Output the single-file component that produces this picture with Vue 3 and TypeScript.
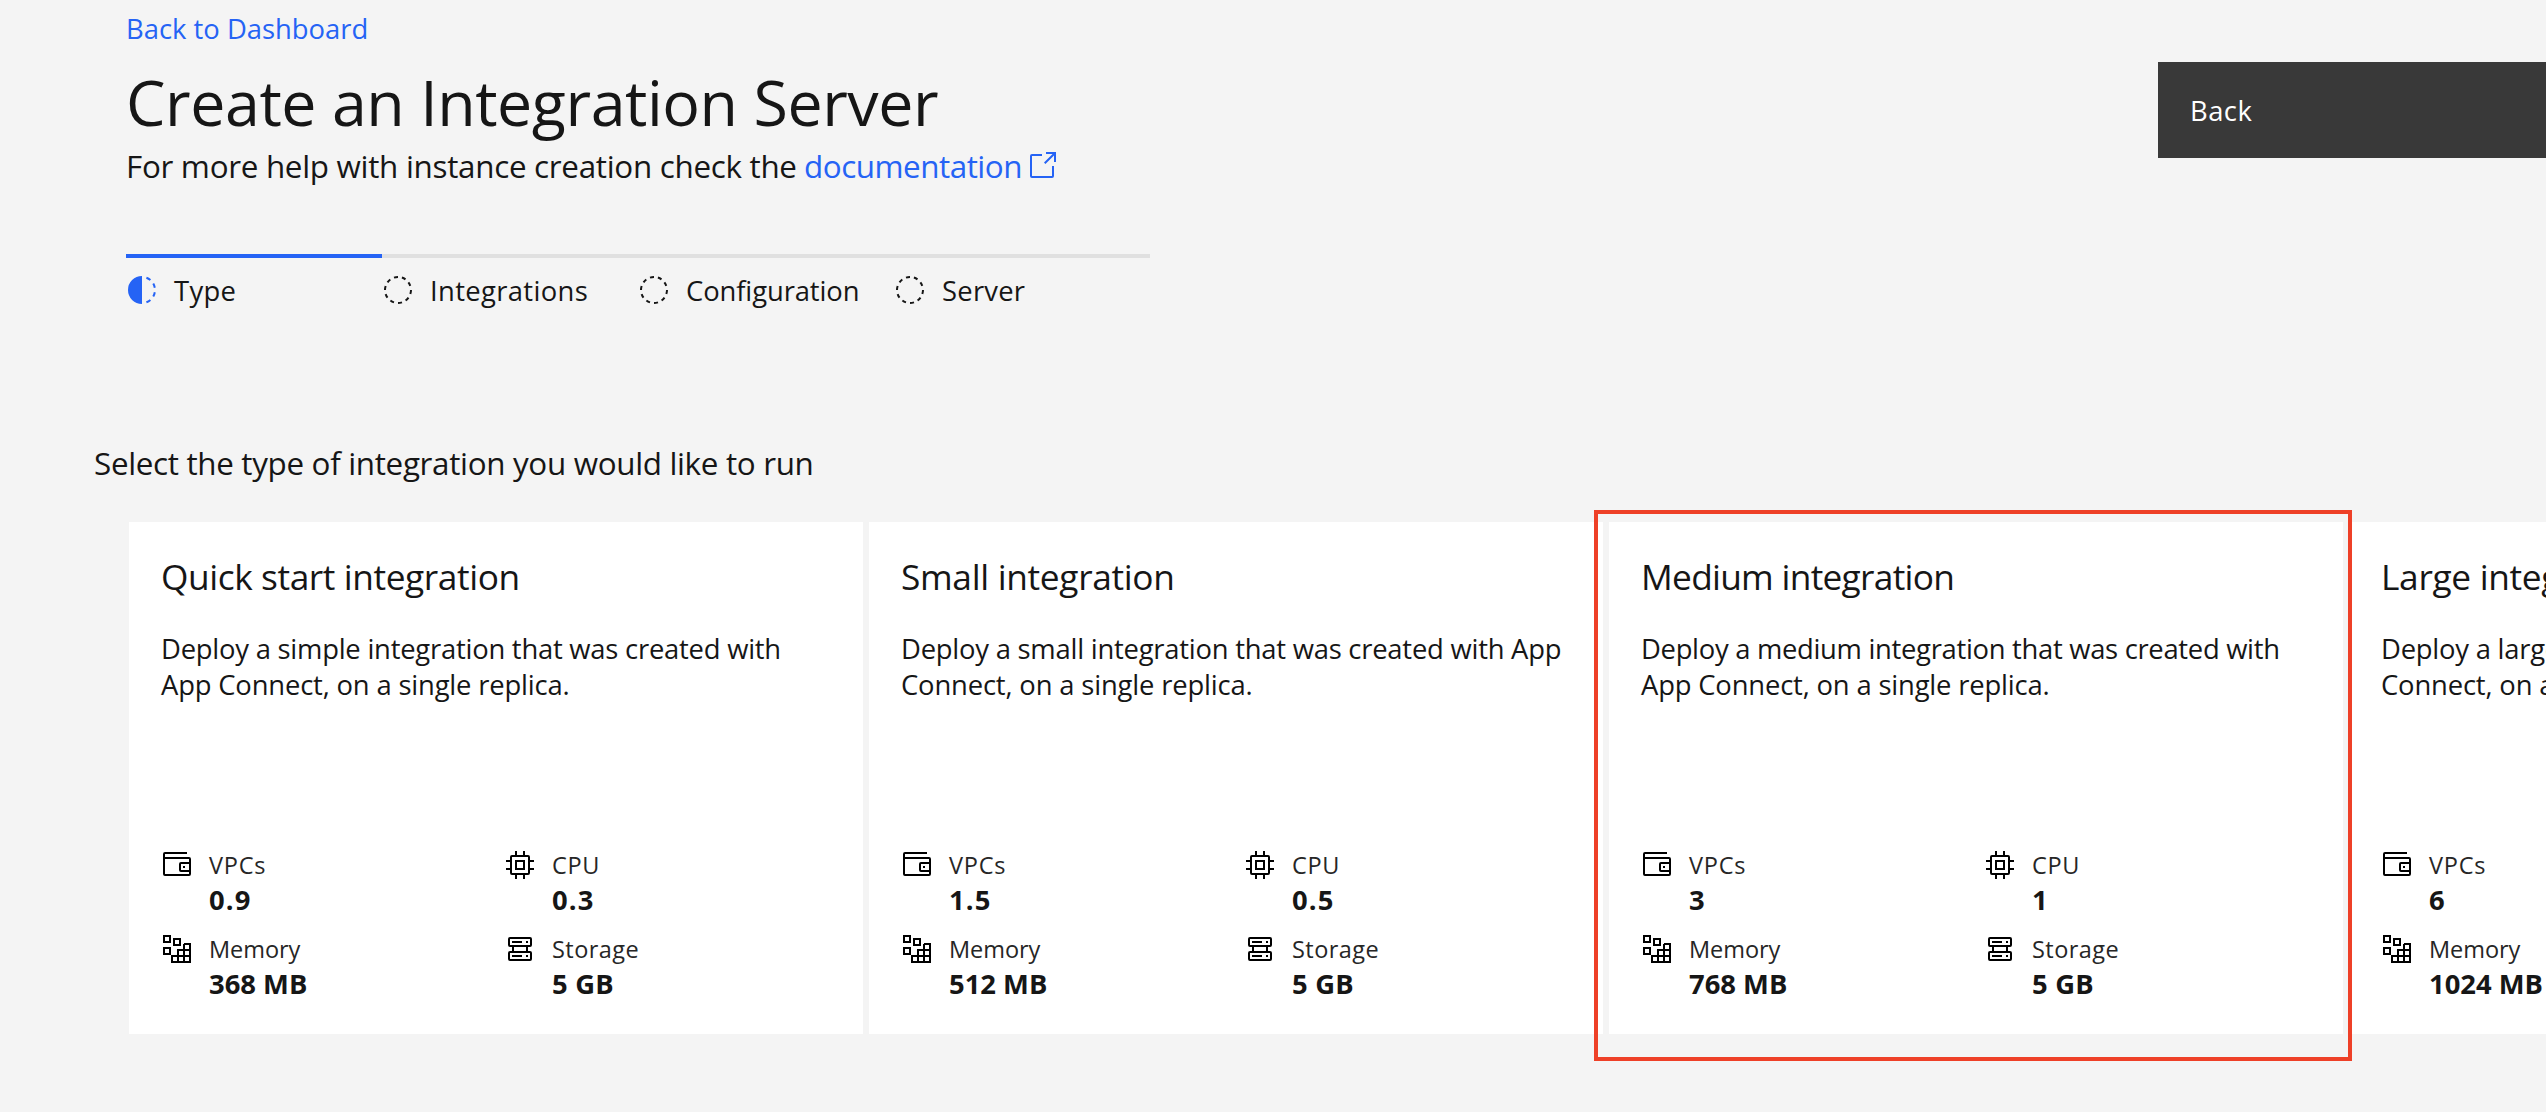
<script setup lang="ts">
interface Line {
  text: string
  tracking: number
}

interface Tile {
  title: Line
  lines: Line[]
  vpcs: Line
  memory: Line
  cpu: Line
  storage: Line
  highlighted?: boolean
}

interface Step {
  label: Line
  current?: boolean
}

const steps: Step[] = [
  { label: { text: 'Type', tracking: 0.3 }, current: true },
  { label: { text: 'Integrations', tracking: 0.35 } },
  { label: { text: 'Configuration', tracking: -0.1 } },
  { label: { text: 'Server', tracking: 0.24 } },
]

const tiles: Tile[] = [
  {
    title: { text: 'Quick start integration', tracking: -0.42 },
    lines: [
      { text: 'Deploy a simple integration that was created with', tracking: -0.23 },
      { text: 'App Connect, on a single replica.', tracking: -0.17 },
    ],
    vpcs: { text: '0.9', tracking: 1.2 },
    cpu: { text: '0.3', tracking: 1.2 },
    memory: { text: '368 MB', tracking: 0 },
    storage: { text: '5 GB', tracking: 0.2 },
  },
  {
    title: { text: 'Small integration', tracking: -0.33 },
    lines: [
      { text: 'Deploy a small integration that was created with App', tracking: -0.23 },
      { text: 'Connect, on a single replica.', tracking: -0.16 },
    ],
    vpcs: { text: '1.5', tracking: 1.2 },
    cpu: { text: '0.5', tracking: 1.2 },
    memory: { text: '512 MB', tracking: 0 },
    storage: { text: '5 GB', tracking: 0.2 },
  },
  {
    title: { text: 'Medium integration', tracking: -0.72 },
    lines: [
      { text: 'Deploy a medium integration that was created with', tracking: -0.3 },
      { text: 'App Connect, on a single replica.', tracking: -0.17 },
    ],
    vpcs: { text: '3', tracking: 0 },
    cpu: { text: '1', tracking: 0 },
    memory: { text: '768 MB', tracking: 0 },
    storage: { text: '5 GB', tracking: 0.2 },
    highlighted: true,
  },
  {
    title: { text: 'Large integration', tracking: -0.33 },
    lines: [
      { text: 'Deploy a large integration that was created with App', tracking: -0.23 },
      { text: 'Connect, on a single replica.', tracking: -0.16 },
    ],
    vpcs: { text: '6', tracking: 0 },
    cpu: { text: '2', tracking: 0 },
    memory: { text: '1024 MB', tracking: 0 },
    storage: { text: '5 GB', tracking: 0.2 },
  },
]

const track = (line: Line) => ({ letterSpacing: `${line.tracking}px` })
</script>

<template>
  <main class="page">
    <header class="header">
      <div class="intro">
        <a class="back-link">Back to Dashboard</a>
        <h1 class="title">Create an Integration Server</h1>
        <p class="subtitle">
          <span class="help">For more help with instance creation check the</span>
          <a class="doc-link">
            <span>documentation</span>
            <svg class="icon" viewBox="0 0 32 32" fill="currentColor">
              <path d="M26,28H6a2,2,0,0,1-2-2V6A2,2,0,0,1,6,4H16V6H6V26H26V16h2V26A2,2,0,0,1,26,28Z" />
              <path d="M20 2V4H26.586L18 12.586L19.414 14L28 5.414V12H30V2Z" />
            </svg>
          </a>
        </p>
      </div>
      <button class="back-button" type="button">Back</button>
    </header>

    <ol class="progress">
      <li v-for="step in steps" :key="step.label.text" class="step" :class="{ current: step.current }">
        <svg v-if="step.current" class="icon" viewBox="0 0 32 32" fill="#2563f5">
          <path
            d="M23.764 6.859l1.285-1.531A13.976 13.976 0 0 0 20.767 2.845l-.683 1.878A11.973 11.973 0 0 1 23.764 6.859zM27.81 14l1.968-.413A13.889 13.889 0 0 0 28.14 9.046L26.409 10A12.52 12.52 0 0 1 27.81 14zM20.084 27.276l.683 1.878a13.873 13.873 0 0 0 4.282-2.482l-1.285-1.532A12.181 12.181 0 0 1 20.084 27.276zM26.409 22l1.732 1a14.14 14.14 0 0 0 1.637-4.587l-1.968-.347A12.152 12.152 0 0 1 26.409 22zM16 30V2a14 14 0 0 0 0 28z"
          />
        </svg>
        <svg v-else class="icon" viewBox="0 0 32 32" fill="#161616">
          <path
            d="M7.7,4.7a14.7,14.7,0,0,0-3,3.1L6.3,9A13.26,13.26,0,0,1,8.9,6.3ZM4.6,12.3l-1.9-.6A12.51,12.51,0,0,0,2,16H4A11.48,11.48,0,0,1,4.6,12.3ZM2.7,20.4a14.4,14.4,0,0,0,2,3.9l1.6-1.2a12.89,12.89,0,0,1-1.7-3.3ZM7.8,27.3a14.4,14.4,0,0,0,3.9,2l.6-1.9A12.89,12.89,0,0,1,9,25.7ZM11.7,2.7l.6,1.9A11.48,11.48,0,0,1,16,4V2A12.51,12.51,0,0,0,11.7,2.7ZM24.2,27.3a15.18,15.18,0,0,0,3.1-3.1L25.7,23A11.53,11.53,0,0,1,23,25.7ZM27.4,19.7l1.9.6A15.47,15.47,0,0,0,30,16H28A11.48,11.48,0,0,1,27.4,19.7ZM29.2,11.6a14.4,14.4,0,0,0-2-3.9L25.6,8.9a12.89,12.89,0,0,1,1.7,3.3ZM24.1,4.6a14.4,14.4,0,0,0-3.9-2l-.6,1.9a12.89,12.89,0,0,1,3.3,1.7ZM20.3,29.3l-.6-1.9A11.48,11.48,0,0,1,16,28v2A21.42,21.42,0,0,0,20.3,29.3Z"
          />
        </svg>
        <span :style="track(step.label)">{{ step.label.text }}</span>
      </li>
    </ol>

    <h2 class="prompt">Select the type of integration you would like to run</h2>

    <div class="tiles">
      <section v-for="tile in tiles" :key="tile.title.text" class="tile">
        <h3 class="tile-title" :style="track(tile.title)">{{ tile.title.text }}</h3>
        <p class="description">
          <span v-for="line in tile.lines" :key="line.text" :style="track(line)">{{ line.text }}</span>
        </p>
        <div class="metrics">
          <div class="metric">
            <svg class="icon" viewBox="0 0 32 32">
              <path d="M22,17h2v2H22Z" />
              <path
                d="M28,8H4V5H26V3H4A2,2,0,0,0,2,5V25a2,2,0,0,0,2,2H28a2,2,0,0,0,2-2V10A2,2,0,0,0,28,8ZM4,25V10H28v3H20a2,2,0,0,0-2,2v6a2,2,0,0,0,2,2h8v2Zm24-4H20V15h8Z"
              />
            </svg>
            <div>
              <div class="label vpcs">VPCs</div>
              <div class="value" :style="track(tile.vpcs)">{{ tile.vpcs.text }}</div>
            </div>
          </div>
          <div class="metric">
            <svg class="icon" viewBox="0 0 32 32">
              <path d="M11,11V21H21V11Zm8,8H13V13h6Z" />
              <path
                d="M30,13V11H26V8a2,2,0,0,0-2-2H21V2H19V6H13V2H11V6H8A2,2,0,0,0,6,8v3H2v2H6v6H2v2H6v3a2,2,0,0,0,2,2h3v4h2V26h6v4h2V26h3a2,2,0,0,0,2-2V21h4V19H26V13ZM24,24H8V8H24Z"
              />
            </svg>
            <div>
              <div class="label cpu">CPU</div>
              <div class="value" :style="track(tile.cpu)">{{ tile.cpu.text }}</div>
            </div>
          </div>
          <div class="metric">
            <svg class="icon outline" viewBox="0 0 32 32">
              <path d="M3 3h6v6H3zM13 6h6v6h-6zM3 15h6v6H3zM23 11h6v18H11v-6h18M23 11v18M17 29V17h12" />
            </svg>
            <div>
              <div class="label memory">Memory</div>
              <div class="value" :style="track(tile.memory)">{{ tile.memory.text }}</div>
            </div>
          </div>
          <div class="metric">
            <svg class="icon outline" viewBox="0 0 32 32">
              <rect x="5" y="5" width="22" height="8" rx="1" />
              <rect x="5" y="19" width="22" height="8" rx="1" />
              <path d="M8 9h10M22 9h2M8 23h10M22 23h2M9 13v6M23 13v6" />
            </svg>
            <div>
              <div class="label storage">Storage</div>
              <div class="value" :style="track(tile.storage)">{{ tile.storage.text }}</div>
            </div>
          </div>
        </div>
        <div v-if="tile.highlighted" class="highlight"></div>
      </section>
    </div>
  </main>
</template>

<style>
body {
  margin: 0;
  background: #f4f4f4;
}
</style>

<style scoped>
.page {
  box-sizing: border-box;
  width: 2546px;
  height: 1112px;
  overflow: hidden;
  background: #f4f4f4;
  color: #161616;
  font-family: 'Open Sans', 'Noto Sans', sans-serif;
  font-size: 27.4px;
  line-height: 36px;
  white-space: nowrap;
}
h1,
h2,
h3,
p,
ol {
  margin: 0;
  padding: 0;
  font-weight: 400;
}
.icon {
  display: block;
  flex: none;
  width: 32px;
  height: 32px;
}
.header {
  display: flex;
  justify-content: space-between;
  align-items: flex-start;
  height: 254px;
  padding-left: 126px;
}
.intro {
  padding-top: 11px;
}
.back-link {
  display: block;
  color: #2563f5;
}
.title {
  margin-top: 15px;
  font-size: 62.7px;
  line-height: 80px;
  letter-spacing: -0.44px;
}
.subtitle {
  display: flex;
  margin-top: 4px;
  font-size: 31.4px;
  line-height: 40px;
}
.help {
  width: 678px;
  letter-spacing: -0.3px;
}
.doc-link {
  display: flex;
  gap: 4px;
  align-items: flex-start;
  color: #2563f5;
  letter-spacing: -0.48px;
}
.doc-link span {
  width: 218px;
}
.doc-link .icon {
  margin-top: 4px;
}
.back-button {
  box-sizing: border-box;
  width: 388px;
  height: 96px;
  margin-top: 62px;
  padding: 1px 32px 0;
  border: 0;
  background: #393939;
  color: #fff;
  font: inherit;
  letter-spacing: 0.46px;
  text-align: left;
}
.progress {
  display: flex;
  width: 1024px;
  height: 54px;
  margin-left: 126px;
  list-style: none;
}
.step {
  box-sizing: border-box;
  display: flex;
  gap: 16px;
  width: 256px;
  padding-top: 15px;
  border-top: 4px solid #e0e0e0;
}
.step .icon {
  margin-top: 1px;
}
.step.current {
  border-top-color: #2563f5;
}
.prompt {
  margin: 135px 0 39px 94px;
  font-size: 31.4px;
  line-height: 40px;
  letter-spacing: -0.33px;
}
.tiles {
  display: flex;
  gap: 6px;
  padding-left: 129px;
}
.tile {
  position: relative;
  box-sizing: border-box;
  display: flex;
  flex: none;
  flex-direction: column;
  width: 734px;
  height: 512px;
  padding: 32px 32px 34px;
  background: #fff;
}
.tile-title {
  font-size: 35.3px;
  line-height: 44px;
}
.description {
  display: flex;
  flex-direction: column;
  margin-top: 33px;
}
.metrics {
  display: grid;
  grid-template-columns: 343px 1fr;
  row-gap: 16px;
  margin-top: auto;
}
.metric {
  display: flex;
  gap: 16px;
  height: 68px;
}
.metric .icon {
  margin-top: 1px;
  fill: #000;
}
.metric .icon.outline {
  fill: none;
  stroke: #000;
  stroke-width: 2;
}
.label {
  color: #262626;
  font-size: 23.5px;
  line-height: 34px;
}
.vpcs {
  letter-spacing: 0.77px;
}
.cpu {
  letter-spacing: 0.6px;
}
.memory {
  letter-spacing: -0.05px;
}
.storage {
  letter-spacing: 0.45px;
}
.value {
  font-weight: 700;
  line-height: 36px;
}
.highlight {
  position: absolute;
  z-index: 1;
  top: -12px;
  left: -15px;
  box-sizing: border-box;
  width: 758px;
  height: 551px;
  border: 4px solid #ee4027;
}
</style>
